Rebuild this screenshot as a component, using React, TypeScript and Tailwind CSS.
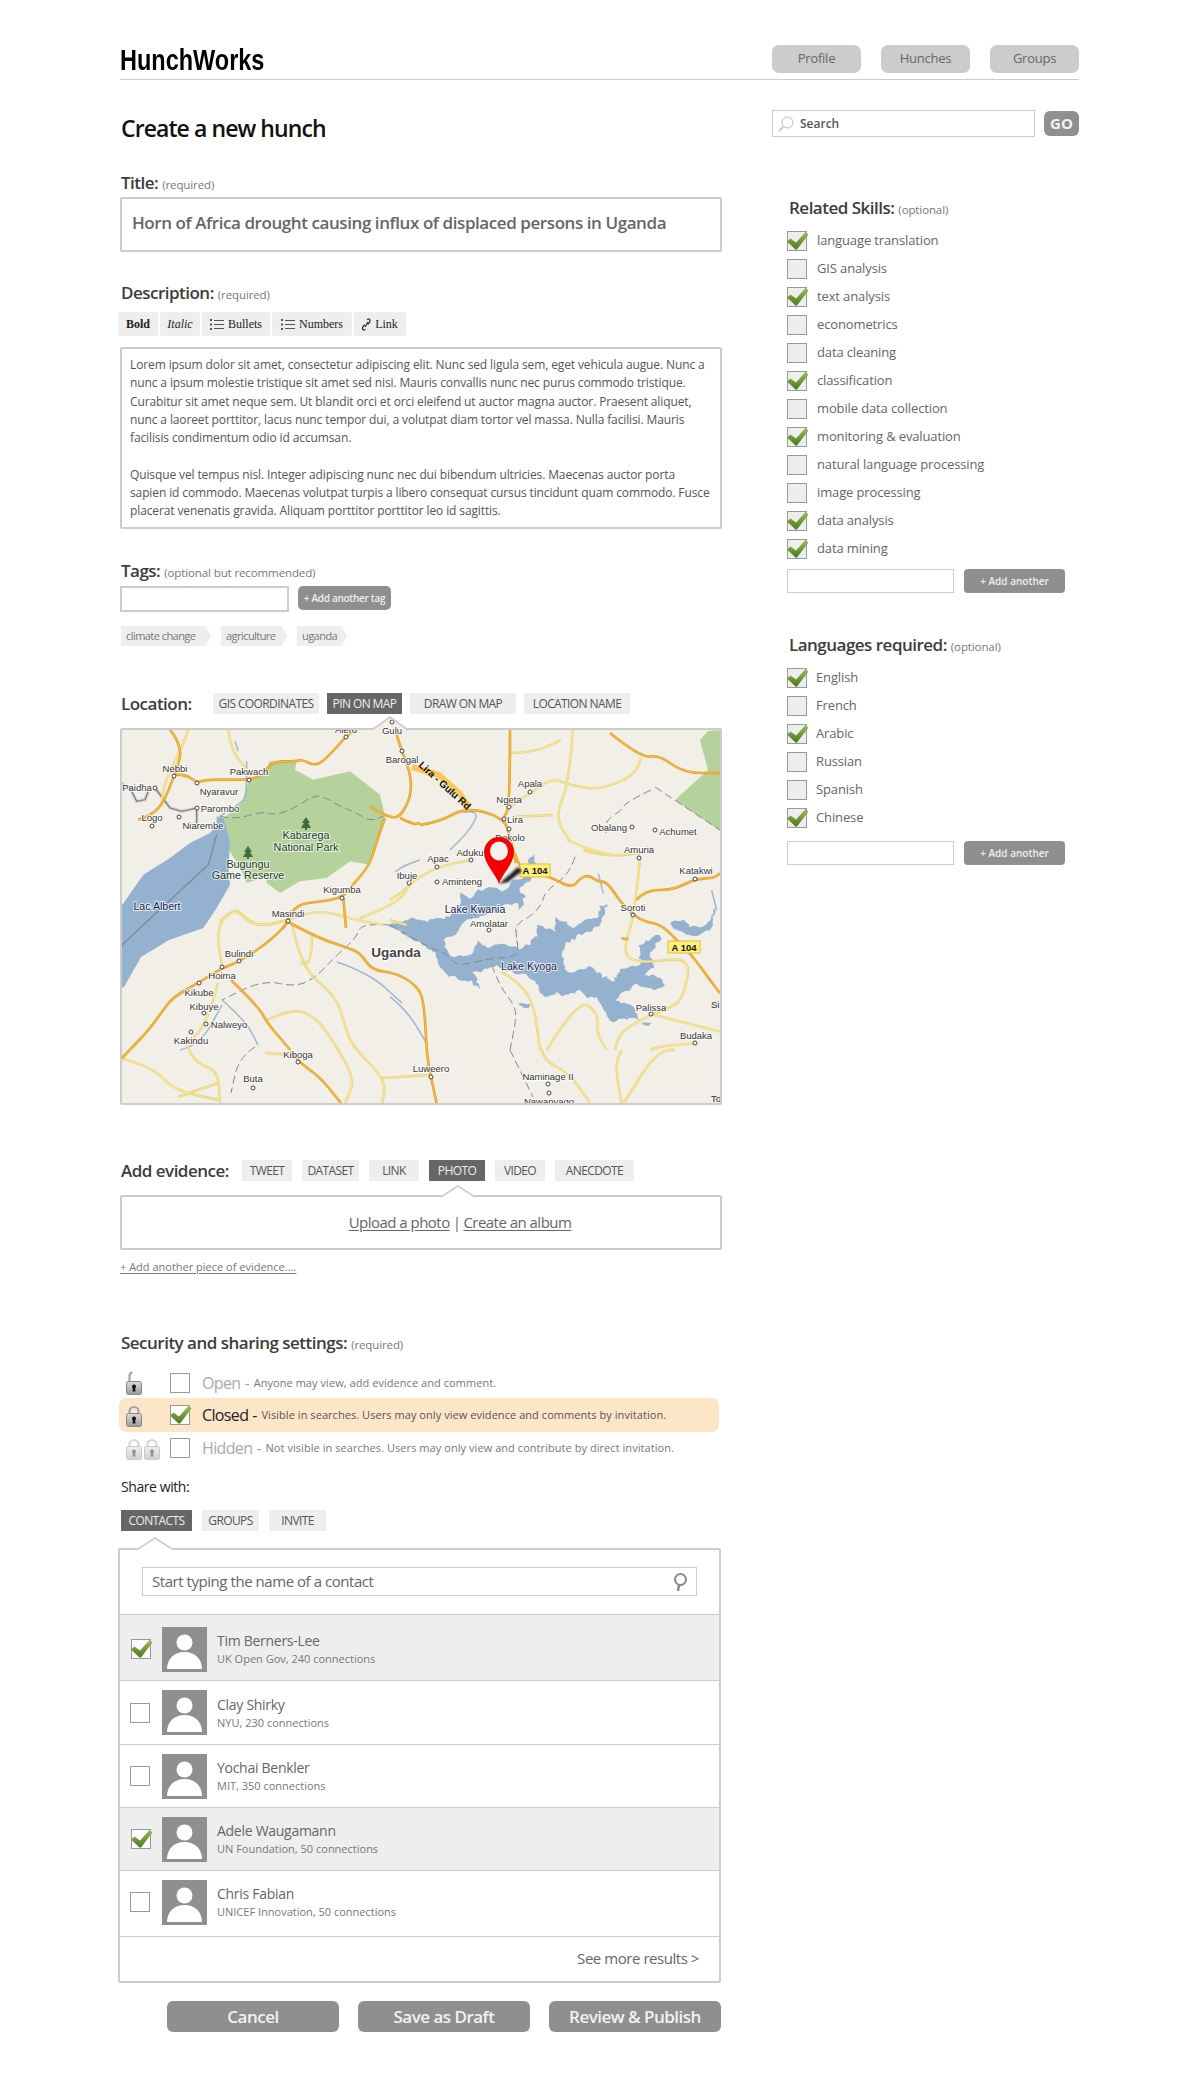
import { useMemo } from "react";

type Pt = [number, number];

const skills: [string, boolean][] = [
  ["language translation", true],
  ["GIS analysis", false],
  ["text analysis", true],
  ["econometrics", false],
  ["data cleaning", false],
  ["classification", true],
  ["mobile data collection", false],
  ["monitoring & evaluation", true],
  ["natural language processing", false],
  ["image processing", false],
  ["data analysis", true],
  ["data mining", true],
];

const languages: [string, boolean][] = [
  ["English", true],
  ["French", false],
  ["Arabic", true],
  ["Russian", false],
  ["Spanish", false],
  ["Chinese", true],
];

const contacts = [
  { name: "Tim Berners-Lee", sub: "UK Open Gov, 240 connections", on: true, h: "h-[66px] pt-[3px]" },
  { name: "Clay Shirky", sub: "NYU, 230 connections", on: false, h: "h-[64px]" },
  { name: "Yochai Benkler", sub: "MIT, 350 connections", on: false, h: "h-[63px]" },
  { name: "Adele Waugamann", sub: "UN Foundation, 50 connections", on: true, h: "h-[63px]" },
  { name: "Chris Fabian", sub: "UNICEF Innovation, 50 connections", on: false, h: "h-[66px] pb-[3px]" },
];

const loremA = [
  "Lorem ipsum dolor sit amet, consectetur adipiscing elit. Nunc sed ligula sem, eget vehicula augue. Nunc a",
  "nunc a ipsum molestie tristique sit amet sed nisi. Mauris convallis nunc nec purus commodo tristique.",
  "Curabitur sit amet neque sem. Ut blandit orci et orci eleifend ut auctor magna auctor. Praesent aliquet,",
  "nunc a laoreet porttitor, lacus nunc tempor dui, a volutpat diam tortor vel massa. Nulla facilisi. Mauris",
  "facilisis condimentum odio id accumsan.",
  "\u00a0",
  "Quisque vel tempus nisl. Integer adipiscing nunc nec dui bibendum ultricies. Maecenas auctor porta",
  "sapien id commodo. Maecenas volutpat turpis a libero consequat cursus tincidunt quam commodo. Fusce",
  "placerat venenatis gravida. Aliquam porttitor porttitor leo id sagittis.",
];

// traced from two 3x views of the map, so convert back to page coordinates
const nw = (pts: number[][]): Pt[] => pts.map(([x, y]) => [120 + x / 3, 728 + y / 3]);
const se = (pts: number[][]): Pt[] => pts.map(([x, y]) => [390 + x / 3, 850 + y / 3]);

const orangeRoads: Pt[][] = [
  nw([[150, 5], [190, 55], [165, 140], [125, 235], [85, 265], [55, 275]]),
  nw([[165, 140], [200, 140], [230, 165], [260, 155], [320, 155], [390, 155], [430, 140], [455, 100], [530, 100], [545, 95], [590, 115], [630, 80], [665, 40], [680, 25], [710, 0]]),
  nw([[830, 20], [845, 70], [870, 130], [875, 200], [840, 270], [800, 265], [750, 235]]),
  nw([[840, 270], [880, 290], [900, 285]]),
  nw([[795, 270], [770, 340], [750, 410], [695, 475], [665, 510], [600, 520], [530, 530], [505, 575], [490, 600]]),
  nw([[670, 510], [678, 600]]),
  [[288, 922], [276, 937], [239, 962], [222, 968], [200, 982], [173, 997], [161, 1013], [149, 1030], [120, 1060]],
  [[420, 825], [439, 822], [467, 807], [504, 818], [510, 837], [516, 863]],
  se([[375, 10], [385, 50], [430, 70], [480, 80], [545, 115], [570, 85], [595, 75], [625, 95], [650, 95], [695, 160], [730, 195], [765, 215], [815, 225], [870, 280], [905, 315], [960, 390], [990, 430]]),
  se([[740, 150], [765, 120], [850, 120], [915, 87], [970, 85], [990, 70]]),
  se([[695, 265], [715, 268]]),
  [[510, 730], [510, 753], [509, 807], [504, 818]],
  [[610, 733], [641, 758], [659, 755], [684, 773], [720, 773]],
  [[288, 922], [316, 937], [345, 947], [361, 953], [371, 970], [396, 973], [416, 985], [424, 1000], [427, 1057], [431, 1077], [437, 1105]],
  [[231, 980], [259, 1007], [267, 1023], [288, 1047], [300, 1063], [320, 1077], [341, 1103]],
];

const yellowRoads: Pt[][] = [
  nw([[205, 5], [190, 50], [130, 170], [125, 235]]),
  nw([[325, 5], [330, 60], [380, 125]]),
  nw([[300, 580], [345, 535], [385, 580], [430, 595], [505, 575], [600, 545], [700, 575], [790, 590]]),
  nw([[720, 570], [830, 530], [870, 470]]),
  se([[0, 150], [40, 125], [60, 100], [140, 50], [245, 30]]),
  se([[0, 210], [50, 225]]),
  se([[750, 25], [735, 190], [695, 315], [755, 340], [905, 320], [880, 440], [850, 470], [785, 493], [690, 545], [675, 600]]),
  se([[785, 493], [990, 545]]),
  se([[915, 580], [830, 585], [780, 600]]),
  se([[580, 0], [640, 20], [750, 10]]),
  se([[335, 365], [390, 400], [430, 460], [445, 560], [450, 600]]),
  se([[470, 600], [565, 445], [625, 490], [620, 550], [650, 600]]),
  [[510, 753], [533, 753], [561, 740]],
  [[573, 730], [569, 783], [555, 817], [569, 840]],
  [[512, 817], [553, 815]],
  [[510, 807], [531, 792], [553, 778], [569, 785], [600, 790], [635, 775], [641, 758]],
  [[567, 840], [606, 857], [639, 853]],
  [[675, 1050], [659, 1047], [624, 1103]],
  [[622, 1050], [614, 1060], [622, 1105]],
  [[288, 920], [255, 930], [235, 907], [216, 927], [222, 967]],
  [[292, 923], [300, 967], [337, 997], [345, 1027], [353, 1047], [386, 1080], [382, 1105]],
  [[312, 933], [312, 962], [300, 964]],
  [[267, 1020], [292, 1008], [316, 1017], [337, 1047], [355, 1080], [345, 1103]],
  [[265, 1053], [296, 1055]],
  [[382, 1078], [431, 1075]],
  [[120, 1058], [153, 1067], [173, 1090], [218, 1100]],
  [[178, 1097], [218, 1083]],
  [[186, 1043], [194, 1063], [218, 1070], [220, 1103]],
  [[218, 983], [206, 1027], [186, 1043]],
  [[541, 1047], [543, 1060], [569, 1073], [590, 1103]],
];

const rivers: Pt[][] = [
  se([[0, 440], [50, 480], [110, 580]]),
  [[337, 962], [369, 973], [402, 1003]],
  nw([[380, 100], [380, 200], [370, 220], [300, 265]]),
  nw([[345, 40], [355, 70]]),
  se([[625, 70], [640, 130]]),
  se([[965, 120], [980, 180]]),
  [[420, 860], [405, 865], [395, 872]],
  [[463, 812], [480, 810], [470, 830], [450, 850]],
  [[222, 1000], [245, 1020], [258, 1045]],
  [[180, 1050], [200, 1045], [222, 1005]],
];

const dashed: Pt[][] = [
  nw([[300, 265], [345, 275], [425, 250], [465, 262], [525, 240], [575, 205], [610, 205], [660, 235], [700, 250], [750, 280], [790, 265]]),
  [[655, 787], [720, 830]],
  [[651, 790], [626, 802], [622, 810], [606, 820], [606, 833]],
  se([[555, 20], [540, 70], [465, 125], [455, 165], [420, 200], [390, 215], [375, 235], [385, 290], [380, 320], [300, 325], [200, 350], [170, 310], [125, 295], [60, 260], [0, 225]]),
  [[390, 925], [361, 923], [357, 937], [335, 957], [316, 977], [296, 987], [263, 980], [222, 1000]],
  se([[305, 345], [330, 410], [370, 460], [380, 500], [360, 600]]),
  [[510, 1050], [533, 1097]],
  [[255, 1047], [239, 1057], [231, 1093]],
];

const labels: { t: string; x: number; y: number; dot?: Pt }[] = [
  { t: "Gulu", x: 392, y: 734, dot: [392, 722] },
  { t: "Alero", x: 346, y: 733, dot: [346, 737] },
  { t: "Barogal", x: 402, y: 763, dot: [402, 751] },
  { t: "Nebbi", x: 175, y: 772, dot: [174, 776] },
  { t: "Pakwach", x: 249, y: 775, dot: [249, 780] },
  { t: "Paidha", x: 137, y: 791, dot: [155, 788] },
  { t: "Nyaravur", x: 219, y: 795, dot: [197, 783] },
  { t: "Parombo", x: 220, y: 812, dot: [197, 808] },
  { t: "Logo", x: 152, y: 821, dot: [152, 826] },
  { t: "Niarembe", x: 203, y: 829, dot: [179, 817] },
  { t: "Apala", x: 530, y: 787, dot: [530, 792] },
  { t: "Ngeta", x: 509, y: 803, dot: [509, 807] },
  { t: "Lira", x: 515, y: 823, dot: [504, 819] },
  { t: "Obalang", x: 609, y: 831, dot: [632, 827] },
  { t: "Achumet", x: 678, y: 835, dot: [655, 830] },
  { t: "Dokolo", x: 510, y: 841, dot: [509, 829] },
  { t: "Amuria", x: 639, y: 853, dot: [639, 858] },
  { t: "Katakwi", x: 696, y: 874, dot: [695, 879] },
  { t: "Aduku", x: 470, y: 856, dot: [471, 860] },
  { t: "Apac", x: 438, y: 862, dot: [437, 867] },
  { t: "Ibuje", x: 407, y: 879, dot: [409, 883] },
  { t: "Aminteng", x: 462, y: 885, dot: [437, 882] },
  { t: "Kigumba", x: 342, y: 893, dot: [342, 898] },
  { t: "Masindi", x: 288, y: 917, dot: [288, 921] },
  { t: "Amolatar", x: 489, y: 927, dot: [489, 930] },
  { t: "Soroti", x: 633, y: 911, dot: [633, 915] },
  { t: "Bulindi", x: 239, y: 957, dot: [239, 961] },
  { t: "Hoima", x: 222, y: 979, dot: [222, 967] },
  { t: "Kikube", x: 199, y: 996, dot: [199, 983] },
  { t: "Kibuye", x: 204, y: 1010, dot: [204, 1013] },
  { t: "Nalweyo", x: 229, y: 1028, dot: [206, 1024] },
  { t: "Kakindu", x: 191, y: 1044, dot: [191, 1032] },
  { t: "Palissa", x: 651, y: 1011, dot: [651, 1014] },
  { t: "Budaka", x: 696, y: 1039, dot: [695, 1043] },
  { t: "Kiboga", x: 298, y: 1058, dot: [298, 1062] },
  { t: "Luweero", x: 431, y: 1072, dot: [431, 1077] },
  { t: "Buta", x: 253, y: 1082, dot: [253, 1088] },
  { t: "Naminage II", x: 548, y: 1080, dot: [548, 1084] },
  { t: "Nawanyago", x: 549, y: 1105, dot: [549, 1093] },
];

const parkNW = nw([
  [450, 100], [530, 100], [525, 125], [580, 155], [690, 130], [780, 200], [795, 265], [770, 340], [750, 410], [690, 400], [620, 450], [540, 460], [480, 495],
  [440, 465], [440, 445], [380, 465], [360, 420], [330, 370], [320, 300], [300, 280], [365, 225], [385, 160], [425, 145],
]);

const albert: Pt[] = [
  ...nw([[290, 265], [310, 270], [320, 300], [330, 350], [325, 420], [330, 470], [290, 540], [250, 600]]),
  [169, 940], [141, 957], [124, 987], [120, 988], [120, 908],
  ...nw([[70, 440], [150, 390], [210, 345], [270, 315], [290, 290]]),
];

const kyoga = se([
  [0, 225], [30, 215], [70, 205], [110, 212], [180, 200], [215, 160], [210, 130], [240, 145], [265, 120], [300, 115], [340, 120], [360, 100], [400, 85], [415, 50], [420, 20], [435, 15],
  [440, 50], [415, 90], [385, 120], [405, 140], [385, 185], [395, 215], [375, 235], [385, 295], [420, 280], [440, 265], [445, 225], [465, 235], [495, 240], [500, 205], [520, 215], [545, 235],
  [570, 215], [620, 200], [630, 170], [650, 160], [640, 190], [625, 230], [570, 255], [530, 280], [515, 305], [520, 345], [540, 370], [600, 350], [625, 370], [670, 395], [700, 355], [750, 340],
  [750, 290], [780, 270], [800, 250], [810, 270], [780, 310], [790, 350], [760, 375], [810, 380], [825, 405], [800, 420], [740, 405], [700, 430], [680, 450], [730, 470], [745, 510], [700, 505],
  [660, 515], [640, 480], [620, 445], [590, 440], [570, 420], [520, 440], [500, 425], [465, 440], [445, 410], [420, 380], [370, 370], [310, 345], [280, 360], [250, 370], [270, 415], [240, 395],
  [180, 380], [150, 350], [130, 300], [70, 270],
]);

const peninsula = se([
  [165, 265], [195, 255], [225, 210], [290, 195], [345, 165], [385, 160], [395, 215], [375, 235], [385, 295], [340, 280], [290, 295], [265, 270], [245, 315], [180, 320], [165, 290],
]);

const eastLake = se([[845, 215], [880, 210], [900, 230], [940, 230], [965, 200], [975, 175], [965, 235], [920, 260], [880, 250], [850, 235]]);

// rough coastline: breaks each edge up and pushes the points off it
function jagged(points: Pt[], step: number, amp: number) {
  let seed = 7;
  const rnd = () => {
    seed = (seed * 16807) % 2147483647;
    return seed / 2147483647 - 0.5;
  };
  const out: string[] = [];
  points.forEach((p, i) => {
    const q = points[(i + 1) % points.length];
    const n = Math.max(1, Math.round(Math.hypot(q[0] - p[0], q[1] - p[1]) / step));
    for (let k = 0; k < n; k++) {
      const x = p[0] + ((q[0] - p[0]) * k) / n + rnd() * amp;
      const y = p[1] + ((q[1] - p[1]) * k) / n + rnd() * amp;
      out.push(`${x.toFixed(1)},${y.toFixed(1)}`);
    }
  });
  return out.join(" ");
}

const line = (pts: Pt[]) => pts.map((p) => p.join(",")).join(" ");

// rounds the corners off a road
function curve(pts: Pt[]) {
  let d = `M${pts[0][0]} ${pts[0][1]}`;
  for (let i = 1; i < pts.length - 1; i++) {
    const mx = (pts[i][0] + pts[i + 1][0]) / 2;
    const my = (pts[i][1] + pts[i + 1][1]) / 2;
    d += `Q${pts[i][0]} ${pts[i][1]} ${mx} ${my}`;
  }
  const last = pts[pts.length - 1];
  return `${d}L${last[0]} ${last[1]}`;
}

function UgandaMap() {
  const lake = useMemo(() => jagged(kyoga, 3, 3.5), []);
  const land = useMemo(() => jagged(peninsula, 3, 2), []);
  const east = useMemo(() => jagged(eastLake, 3, 2.5), []);

  return (
    <svg viewBox="122 730 598 373" className="relative z-10 block h-full w-full overflow-visible" fontFamily="'Liberation Sans', sans-serif">
      <defs>
        <clipPath id="mapClip">
          <polygon points="122,730 373,730 390,718 407,730 720,730 720,1103 122,1103" />
        </clipPath>
        <filter id="soft" x="-30%" y="-30%" width="160%" height="160%">
          <feGaussianBlur stdDeviation="1" />
        </filter>
      </defs>
      <g clipPath="url(#mapClip)">
        <rect x="120" y="715" width="602" height="390" fill="#f2efe9" />
        <polygon points={line(parkNW)} fill="#b5d29c" />
        <polygon points="700,740 708,731 722,730 722,832 675,800 708,770" fill="#b5d29c" />
        <polygon points={line(albert)} fill="#94b1cf" />
        <polygon points={lake} fill="#94b1cf" />
        <polygon points={land} fill="#f2efe9" />
        <polygon points={east} fill="#94b1cf" />
        <polygon points={jagged(se([[385, 460], [420, 462], [415, 475], [395, 472]]), 3, 1.5)} fill="#94b1cf" />
        <polygon points={jagged(se([[755, 518], [785, 518], [775, 527], [760, 526]]), 3, 1)} fill="#94b1cf" />
        {rivers.map((r, i) => (
          <path key={i} d={curve(r)} fill="none" stroke="#9db7d2" strokeWidth="1.5" />
        ))}
        {dashed.map((r, i) => (
          <path key={i} d={curve(r)} fill="none" stroke="#83888f" strokeWidth="1" strokeDasharray="8 4" />
        ))}
        <polyline points={line(nw([[290, 320], [265, 410], [60, 600]]))} fill="none" stroke="#7d8690" strokeWidth="1.2" />
        <polyline points={line([...nw([[60, 600]]), [120, 947]])} fill="none" stroke="#7d8690" strokeWidth="1.2" />
        {[
          nw([[105, 180], [150, 240], [185, 250], [230, 240], [230, 290]]),
          nw([[0, 165], [30, 180], [50, 220], [75, 215], [85, 190]]),
        ].map((r, i) => (
          <g key={i} fill="none">
            <polyline points={line(r)} stroke="#ddd" strokeWidth="4" />
            <polyline points={line(r)} stroke="#808080" strokeWidth="1.4" />
          </g>
        ))}
        {yellowRoads.map((r, i) => (
          <g key={i} fill="none" strokeLinejoin="round">
            <path d={curve(r)} stroke="#e3cf7c" strokeWidth="2.4" />
            <path d={curve(r)} stroke="#fbe98c" strokeWidth="1.2" />
          </g>
        ))}
        {orangeRoads.map((r, i) => (
          <g key={i} fill="none" strokeLinejoin="round">
            <path d={curve(r)} stroke="#e09d26" strokeWidth="2.6" />
            <path d={curve(r)} stroke="#f8bb42" strokeWidth="1.2" />
          </g>
        ))}
        <polyline points="412,767 439,775 459,793 469,807" fill="none" stroke="#fcc75a" strokeWidth="6" strokeLinejoin="round" />
        <text transform="translate(418 766) rotate(42)" fontSize="10" fontWeight="700" fill="#111">
          Lira - Gulu Rd
        </text>
        {labels.map((l) =>
          l.dot ? <circle key={l.t + "d"} cx={l.dot[0]} cy={l.dot[1]} r="2" fill="#fff" stroke="#444" strokeWidth="1" /> : null
        )}
        {labels.map((l) => (
          <text key={l.t} x={l.x} y={l.y} fontSize="9.5" textAnchor="middle" fill="#333" stroke="#fff" strokeWidth="2" paintOrder="stroke" strokeOpacity="0.75">
            {l.t}
          </text>
        ))}
        <g fontSize="10.8" textAnchor="middle" fill="#173b17" stroke="#fff" strokeWidth="2" paintOrder="stroke" strokeOpacity="0.7">
          <text x="306" y="839">Kabarega</text>
          <text x="306" y="851">National Park</text>
          <text x="248" y="868">Bugungu</text>
          <text x="248" y="879">Game Reserve</text>
        </g>
        <path d="M306 817l-4 6h2l-3 5h10l-3-5h2zM305 828h2v2h-2z" fill="#3f6b3f" />
        <path d="M248 846l-4 6h2l-3 5h10l-3-5h2zM247 857h2v2h-2z" fill="#3f6b3f" />
        <g fontSize="10.6" textAnchor="middle" fill="#15204f" stroke="#fff" strokeWidth="2" paintOrder="stroke" strokeOpacity="0.75">
          <text x="157" y="910">Lac Albert</text>
          <text x="475" y="913">Lake Kwania</text>
          <text x="529" y="970">Lake Kyoga</text>
        </g>
        <text x="396" y="957" fontSize="13.5" fontWeight="700" textAnchor="middle" fill="#444" stroke="#fff" strokeWidth="2.5" paintOrder="stroke">
          Uganda
        </text>
        <text x="711" y="1102" fontSize="9.5" fill="#333">Tor</text>
        <text x="711" y="1008" fontSize="9.5" fill="#333">Si</text>
        <g fontSize="9.5" fontWeight="700" textAnchor="middle" fill="#111">
          <rect x="520" y="864" width="30" height="13" fill="#fff27a" stroke="#e8b92e" />
          <text x="535" y="874">A 104</text>
          <rect x="668" y="941" width="32" height="12" fill="#fff27a" stroke="#e8b92e" />
          <text x="684" y="951">A 104</text>
        </g>
        <path d="M499 884L518 867 522 871 508 882z" fill="#222" filter="url(#soft)" />
        <path d="M499 884c-3-10-15-20-15-32a15 15 0 0 1 30 0c0 12-12 22-15 32z" fill="#f40000" />
        <ellipse cx="499" cy="851" rx="9" ry="9.5" fill="#f4f1ec" />
      </g>
      <polyline points="372,730 390,717 408,730" fill="none" stroke="#ccc" strokeWidth="1.6" />
    </svg>
  );
}

function Check() {
  return (
    <svg viewBox="0 0 22 18" className="absolute left-[-1px] top-0 h-[18px] w-[22px]">
      <defs>
        <linearGradient id="chk" x1="0" y1="0" x2="0" y2="1">
          <stop offset="0" stopColor="#9cbb57" />
          <stop offset="1" stopColor="#4b7a1d" />
        </linearGradient>
      </defs>
      <path d="M0 9.5L3.5 6.5 9 10.5 18.5 0 21.5 2.5 10 17.5 8.5 17.5z" fill="url(#chk)" />
    </svg>
  );
}

function Box({ on, white, className = "" }: { on?: boolean; white?: boolean; className?: string }) {
  return (
    <div className={`relative h-5 w-5 shrink-0 border border-[#999] ${white ? "bg-white" : "bg-[#eee]"} ${className}`}>
      {on && <Check />}
    </div>
  );
}

function Lock({ open, pale }: { open?: boolean; pale?: boolean }) {
  return (
    <svg viewBox="0 0 16 24" className={`h-6 w-4 shrink-0 ${pale ? "opacity-45" : ""}`}>
      <defs>
        <linearGradient id="lockBody" x1="0" y1="0" x2="0" y2="1">
          <stop offset="0" stopColor="#ddd" />
          <stop offset="1" stopColor="#999" />
        </linearGradient>
      </defs>
      {open ? (
        <path d="M3.5 12V5.5C3.5 3 5 1.5 6.5 1.5" fill="none" stroke="#a5a5a5" strokeWidth="2.2" />
      ) : (
        <path d="M3.5 12V8.5a4.5 4.5 0 0 1 9 0V12" fill="none" stroke="#a5a5a5" strokeWidth="2.2" />
      )}
      <rect x="0.5" y="10.5" width="15" height="13" rx="2" fill="url(#lockBody)" stroke="#888" />
      <circle cx="8" cy="15.5" r="2" fill="#111" />
      <path d="M7 16h2l.5 4.5h-3z" fill="#111" />
    </svg>
  );
}

function Person() {
  return (
    <svg viewBox="0 0 45 45" className="h-[45px] w-[45px] shrink-0 bg-[#8f8f8f]">
      <circle cx="22.5" cy="15.5" r="8" fill="#fff" />
      <path d="M5 42c0-10 7-17 17.5-17S40 32 40 42z" fill="#fff" />
    </svg>
  );
}

function Notch({ className }: { className: string }) {
  return (
    <svg viewBox="0 0 36 13" className={`absolute h-[13px] w-9 ${className}`}>
      <polygon points="0,13 18,1 36,13" fill="#fff" />
      <polyline points="1,12 18,1 35,12" fill="none" stroke="#ccc" strokeWidth="1.6" />
    </svg>
  );
}

function Label({ title, note, className = "" }: { title: string; note?: string; className?: string }) {
  return (
    <div className={`flex h-5 items-baseline whitespace-nowrap ${className}`}>
      <span className="text-[17px] leading-5 font-semibold tracking-[-0.03em] text-[#3c3c3c]">{title}</span>
      {note && <span className="ml-1 text-[11.5px] leading-5 tracking-[-0.01em] text-[#777]">{note}</span>}
    </div>
  );
}

function Tab({ w, active, children }: { w: string; active?: boolean; children: string }) {
  return (
    <div className={`flex h-[21px] items-center justify-center text-[12px] tracking-[-0.05em] ${w} ${active ? "bg-[#666] text-[#eee]" : "bg-[#eee] text-[#555]"}`}>
      {children}
    </div>
  );
}

function ToolBtn({ w, className = "", children }: { w: string; className?: string; children: React.ReactNode }) {
  return (
    <div className={`flex h-6 items-center justify-center gap-1 rounded-[3px] bg-[#eee] font-['Liberation_Serif',serif] text-[12px] text-[#222] ${w} ${className}`}>
      {children}
    </div>
  );
}

function ListIcon() {
  return (
    <svg viewBox="0 0 14 11" className="h-[11px] w-[14px]">
      <path d="M1 0v2M1 4.500v2M1 9v2" stroke="#555" strokeWidth="2" />
      <path d="M4 1.500h10M4 5.500h10M4 9.500h10" stroke="#555" strokeWidth="1" />
    </svg>
  );
}

function LinkIcon() {
  return (
    <svg viewBox="0 0 9 13" className="h-[13px] w-[9px]">
      <path d="M5 1.500c1.500-1 3-.3 3 1.200 0 1-1 2.500-2.200 3.500M3.500 11.500c-1.500 1-3 .3-3-1.200 0-1 1-2.500 2.200-3.500M3 9l3-5" fill="none" stroke="#222" strokeWidth="1.2" />
    </svg>
  );
}

function Tag({ w, children }: { w: string; children: string }) {
  return (
    <div className={`flex h-5 items-center bg-[#eee] pl-[5px] text-[11px] tracking-[-0.05em] text-[#777] [clip-path:polygon(0_0,calc(100%-5px)_0,100%_50%,calc(100%-5px)_100%,0_100%)] ${w}`}>
      {children}
    </div>
  );
}

function CheckList({ items, textGap }: { items: [string, boolean][]; textGap: string }) {
  return (
    <div className="flex flex-col gap-2">
      {items.map(([text, on]) => (
        <div key={text} className={`flex h-5 items-center ${textGap}`}>
          <Box on={on} />
          <span className="whitespace-nowrap text-[13px] tracking-[-0.01em] text-[#666]">{text}</span>
        </div>
      ))}
    </div>
  );
}

function AddRow({ className = "" }: { className?: string }) {
  return (
    <div className={`flex gap-[10px] ${className}`}>
      <div className="h-6 w-[167px] border border-[#ccc] bg-white" />
      <div className="flex h-6 w-[101px] items-center justify-center rounded-[4px] bg-[#8f8f8f] text-[10px] font-semibold text-[#eee]">
        + Add another
      </div>
    </div>
  );
}

function SecurityRow({ lock, on, name, desc, tone, h }: { lock: React.ReactNode; on?: boolean; name: string; desc: string; tone: string; h: string }) {
  return (
    <div className={`flex items-center rounded-[7px] pl-[7px] ${h} ${on ? "bg-[#fde6c8]" : ""}`}>
      <div className="flex w-[44px] shrink-0 gap-[2px]">{lock}</div>
      <Box on={on} white />
      <span className={`ml-3 text-[16px] tracking-[-0.04em] ${tone}`}>{name}</span>
      <span className={`ml-1 text-[16px] ${tone}`}>-</span>
      <span className={`ml-1 whitespace-nowrap text-[11px] tracking-[0.005em] ${on ? "text-[#555]" : "text-[#777]"}`}>{desc}</span>
    </div>
  );
}

export default function App() {
  return (
    <div className="h-[2088px] w-[1198px] overflow-hidden bg-white pl-[120px] font-['Open_Sans',sans-serif]">
      <div className="w-[959px]">
        {/* Header */}
        <header className="flex h-[80px] items-start justify-between border-b border-[#ccc] pt-[45px]">
          <div className="-mt-[1px] origin-left scale-x-[0.81] font-['Liberation_Sans',sans-serif] text-[29px] leading-[32px] font-bold text-black">
            HunchWorks
          </div>
          <nav className="flex gap-5">
            {["Profile", "Hunches", "Groups"].map((n) => (
              <div key={n} className="flex h-7 w-[89px] items-center justify-center rounded-[7px] bg-[#ccc] text-[13px] tracking-[-0.02em] text-[#666]">
                {n}
              </div>
            ))}
          </nav>
        </header>

        <div className="flex gap-[50px]">
          {/* Left column */}
          <main className="w-[602px] shrink-0">
            <h1 className="mt-[33px] ml-px h-[30px] text-[23px] leading-[30px] font-semibold tracking-[-0.04em] text-[#111]">
              Create a new hunch
            </h1>

            <Label title="Title:" note="(required)" className="mt-[30px] ml-px" />
            <div className="mt-1 flex h-[55px] items-center rounded-[2px] border-2 border-[#ccc] pb-[4px] pl-[10px] text-[17px] font-semibold tracking-[-0.025em] text-[#666]">
              Horn of Africa drought causing influx of displaced persons in Uganda
            </div>

            <Label title="Description:" note="(required)" className="mt-[31px] ml-px" />
            <div className="mt-[9px] -ml-[2px] flex gap-[2px]">
              <ToolBtn w="w-10" className="font-bold">Bold</ToolBtn>
              <ToolBtn w="w-10" className="italic">Italic</ToolBtn>
              <ToolBtn w="w-[68px]"><ListIcon />Bullets</ToolBtn>
              <ToolBtn w="w-20"><ListIcon />Numbers</ToolBtn>
              <ToolBtn w="w-[52px]"><LinkIcon />Link</ToolBtn>
            </div>
            <div className="mt-[11px] h-[182px] rounded-[2px] border-2 border-[#ccc] pt-[7px] pl-[8px] text-[12px] leading-[18.3px] tracking-[-0.01em] text-[#555]">
              {loremA.map((l, i) => (
                <div key={i} className="whitespace-nowrap">{l}</div>
              ))}
            </div>

            <Label title="Tags:" note="(optional but recommended)" className="mt-[32px] ml-px" />
            <div className="mt-[5px] flex gap-[9px]">
              <div className="h-[26px] w-[169px] border-2 border-[#ccc] bg-white" />
              <div className="flex h-6 w-[93px] items-center justify-center rounded-[5px] bg-[#8f8f8f] text-[10px] font-semibold tracking-[-0.03em] text-[#eee]">
                + Add another tag
              </div>
            </div>
            <div className="mt-[14px] ml-px flex gap-[10px]">
              <Tag w="w-[90px]">climate change</Tag>
              <Tag w="w-[66px]">agriculture</Tag>
              <Tag w="w-[50px]">uganda</Tag>
            </div>

            {/* Location */}
            <div className="mt-[47px] flex h-[21px] items-center">
              <span className="ml-px w-[92px] text-[17px] leading-5 font-semibold tracking-[-0.03em] text-[#3c3c3c]">Location:</span>
              <div className="flex gap-2">
                <Tab w="w-[106px]">GIS COORDINATES</Tab>
                <Tab w="w-[75px]" active>PIN ON MAP</Tab>
                <Tab w="w-[106px]">DRAW ON MAP</Tab>
                <Tab w="w-[106px]">LOCATION NAME</Tab>
              </div>
            </div>
            <div className="mt-[14px] h-[377px] rounded-[2px] border-2 border-[#ccc]">
              <UgandaMap />
            </div>

            {/* Evidence */}
            <div className="mt-[55px] flex h-[21px] items-center">
              <span className="ml-px w-[121px] text-[17px] leading-5 font-semibold tracking-[-0.03em] text-[#3c3c3c]">Add evidence:</span>
              <div className="flex gap-[10px]">
                <Tab w="w-[50px]">TWEET</Tab>
                <Tab w="w-[57px]">DATASET</Tab>
                <Tab w="w-[50px]">LINK</Tab>
                <Tab w="w-[56px]" active>PHOTO</Tab>
                <Tab w="w-[50px]">VIDEO</Tab>
                <Tab w="w-[79px]">ANECDOTE</Tab>
              </div>
            </div>
            <div className="relative mt-[14px] flex h-[55px] items-center justify-center rounded-[2px] border-2 border-[#ccc] pl-[78px] text-[15px] tracking-[-0.035em] text-[#666]">
              <Notch className="top-[-12px] left-[318px]" />
              <span className="underline underline-offset-2">Upload a photo</span>
              <span className="mx-[3px]">|</span>
              <span className="underline underline-offset-2">Create an album</span>
            </div>
            <div className="mt-[9px] h-4 text-[11px] leading-4 text-[#777] underline underline-offset-2">
              + Add another piece of evidence....
            </div>

            {/* Security */}
            <Label title="Security and sharing settings:" note="(required)" className="mt-[58px] ml-px" />
            <div className="mt-[15px] w-[600px] -translate-x-px">
              <SecurityRow h="h-[30px]" lock={<Lock open />} name="Open" desc="Anyone may view, add evidence and comment." tone="text-[#aaa]" />
              <SecurityRow h="h-[34px]" on lock={<Lock />} name="Closed" desc="Visible in searches. Users may only view evidence and comments by invitation." tone="text-[#222]" />
              <SecurityRow
                h="h-[32px]"
                lock={<><Lock pale /><Lock pale /></>}
                name="Hidden"
                desc="Not visible in searches. Users may only view and contribute by direct invitation."
                tone="text-[#aaa]"
              />
            </div>

            <div className="mt-[13px] ml-px h-5 text-[14px] leading-5 tracking-[-0.03em] text-[#222]">Share with:</div>
            <div className="mt-[13px] ml-px flex gap-[10px]">
              <Tab w="w-[71px]" active>CONTACTS</Tab>
              <Tab w="w-[57px]">GROUPS</Tab>
              <Tab w="w-[57px]">INVITE</Tab>
            </div>

            {/* Contact picker */}
            <div className="relative mt-[17px] -ml-[2px] h-[435px] w-[603px] rounded-[2px] border-2 border-[#ccc]">
              <Notch className="top-[-13px] left-[17px]" />
              <div className="h-[64px] pt-[17px] pl-[22px]">
                <div className="flex h-[29px] w-[555px] items-center justify-between border border-[#ccc] pr-2 pl-[9px] text-[15px] tracking-[-0.03em] text-[#666]">
                  Start typing the name of a contact
                  <svg viewBox="0 0 16 20" className="h-5 w-4">
                    <circle cx="8.5" cy="7.5" r="5.5" fill="none" stroke="#888" strokeWidth="2" />
                    <path d="M7 13l-1 6" stroke="#888" strokeWidth="2.4" />
                  </svg>
                </div>
              </div>
              {contacts.map((c) => (
                <div key={c.name} className={`flex items-center border-t border-[#ccc] pl-[10px] ${c.h} ${c.on ? "bg-[#eee]" : ""}`}>
                  <Box on={c.on} white className={c.on ? "translate-x-px" : ""} />
                  <div className="ml-3"><Person /></div>
                  <div className="ml-[10px]">
                    <div className="text-[14px] leading-[19px] tracking-[-0.02em] text-[#666]">{c.name}</div>
                    <div className="text-[11px] leading-[17px] text-[#777]">{c.sub}</div>
                  </div>
                </div>
              ))}
              <div className="flex h-[44px] items-center justify-end border-t border-[#ccc] pr-5 text-[15px] tracking-[-0.03em] text-[#666]">
                See more results &gt;
              </div>
            </div>

            <div className="mt-[18px] ml-[47px] flex gap-[19px]">
              {["Cancel", "Save as Draft", "Review & Publish"].map((b) => (
                <div key={b} className="flex h-[31px] w-[172px] items-center justify-center rounded-[6px] bg-[#8f8f8f] text-[17px] font-semibold tracking-[-0.03em] text-[#f2f2f2]">
                  {b}
                </div>
              ))}
            </div>
          </main>

          {/* Right column */}
          <aside className="w-[307px]">
            <div className="mt-[30px] flex items-center justify-between">
              <div className="flex h-[27px] w-[263px] items-center border border-[#ccc] pl-[5px] text-[12px] font-semibold text-[#555]">
                <svg viewBox="0 0 16 16" className="mr-[6px] h-4 w-4">
                  <circle cx="9.5" cy="6.5" r="5.5" fill="none" stroke="#bbb" />
                  <path d="M5.5 10.5L1 15" stroke="#ccc" strokeWidth="2" />
                </svg>
                Search
              </div>
              <div className="flex h-[25px] w-[35px] items-center justify-center rounded-[6px] bg-[#8f8f8f] text-[15px] font-bold text-[#f2f2f2]">
                GO
              </div>
            </div>

            <Label title="Related Skills:" note="(optional)" className="mt-[61px] ml-[17px]" />
            <div className="mt-[13px] ml-[15px]">
              <CheckList items={skills} textGap="gap-[10px]" />
            </div>
            <AddRow className="mt-[10px] ml-[15px]" />

            <Label title="Languages required:" note="(optional)" className="mt-[42px] ml-[17px]" />
            <div className="mt-[13px] ml-[15px]">
              <CheckList items={languages} textGap="gap-[9px]" />
            </div>
            <AddRow className="mt-[13px] ml-[15px]" />
          </aside>
        </div>
      </div>
    </div>
  );
}
